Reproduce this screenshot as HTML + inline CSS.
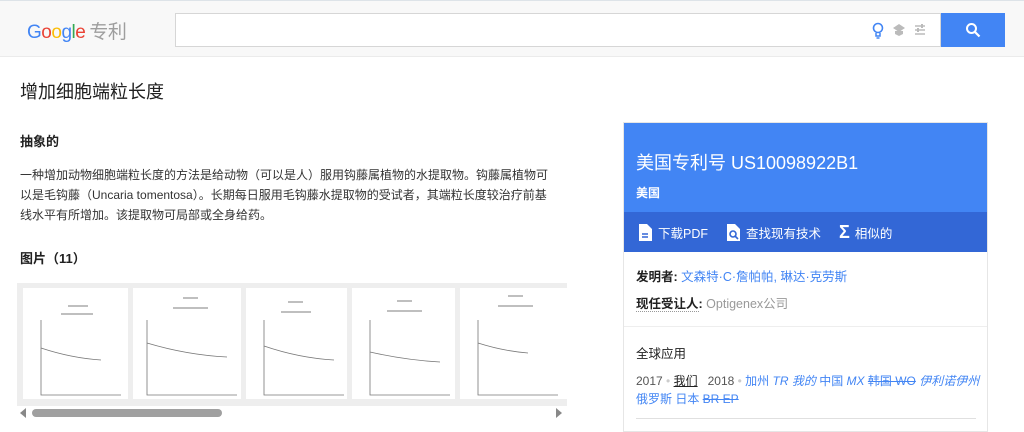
<!DOCTYPE html>
<html><head><meta charset="utf-8"><style>
*{margin:0;padding:0;box-sizing:border-box}
body{width:1024px;height:429px;overflow:hidden;background:#fff;font-family:"Liberation Sans","Noto Sans CJK SC",sans-serif;color:#212121;position:relative}
.hdr{position:absolute;left:0;top:0;width:1024px;height:57px;background:#f8f8f8;border-top:1px solid #dde3e8;border-bottom:1px solid #ebebeb}
.logo{position:absolute;left:27px;top:16px;font-size:19px;letter-spacing:-0.5px}
.logo .zl{color:#9e9e9e;font-size:19px;margin-left:4px}
.search{position:absolute;left:175px;top:12px;width:766px;height:34px;background:#fff;border:1px solid #d6d6d6}
.sbtn{position:absolute;left:941px;top:12px;width:64px;height:34px;background:#4285f4}
h1{position:absolute;left:20px;top:78px;font-size:18px;font-weight:normal;color:#212121}
.t{position:absolute;left:20px;font-size:13px}
.abs{position:absolute;left:20px;top:165px;width:535px;font-size:12px;line-height:20px;color:#333}
.strip{position:absolute;left:17px;top:283px;width:550px;height:123px;background:#eee}
.th{position:absolute;top:5px;height:111px;background:#fff}
.card{position:absolute;left:623px;top:122px;width:365px;height:310px;border:1px solid #e6e6e6;background:#fff}
.blue{height:89px;background:#4285f4;color:#fff;padding:26px 12px}
.blue .a{font-size:18px}
.blue .b{font-size:12px;margin-top:9px;font-weight:bold}
.bar{height:40px;background:#3367d6;color:#fff;font-size:12.5px;display:flex;align-items:center;padding-left:14px;gap:0}
.bar span{display:flex;align-items:center;margin-right:18px}
.row{position:absolute;left:12px;font-size:12.5px}
a{color:#4285f4;text-decoration:none}
</style></head><body>
<div class="hdr">
<div class="logo"><span style="color:#4285f4">G</span><span style="color:#ea4335">o</span><span style="color:#fbbc05">o</span><span style="color:#4285f4">g</span><span style="color:#34a853">l</span><span style="color:#ea4335">e</span><span class="zl">专利</span></div>
<div class="search">
<svg style="position:absolute;left:696px;top:8px" width="12" height="18" viewBox="0 0 12 18"><circle cx="6" cy="6" r="4.5" fill="none" stroke="#4285f4" stroke-width="1.6"/><path d="M4 11v3h4v-3M4.5 16h3" stroke="#4285f4" stroke-width="1.5" fill="none"/></svg>
<svg style="position:absolute;left:716px;top:9px" width="14" height="14" viewBox="0 0 14 14"><path d="M7 1L1 5l6 4 6-4z M3 8v3l4 2 4-2V8" fill="#bbb"/></svg>
<svg style="position:absolute;left:738px;top:10px" width="12" height="12" viewBox="0 0 12 12"><path d="M1 2h10M1 6h10M1 10h10" stroke="#bbb" stroke-width="1.5"/><rect x="7" y="0" width="2" height="4" fill="#bbb"/><rect x="3" y="4" width="2" height="4" fill="#bbb"/></svg>
</div>
<div class="sbtn"><svg style="position:absolute;left:24px;top:9px" width="16" height="16" viewBox="0 0 16 16"><circle cx="6.5" cy="6.5" r="4.5" fill="none" stroke="#fff" stroke-width="2"/><path d="M10 10l4.5 4.5" stroke="#fff" stroke-width="2.2"/></svg></div>
</div>
<h1>增加细胞端粒长度</h1>
<div class="t" style="top:131px;font-weight:bold">抽象的</div>
<div class="abs">一种增加动物细胞端粒长度的方法是给动物（可以是人）服用钩藤属植物的水提取物。钩藤属植物可以是毛钩藤（Uncaria tomentosa）。长期每日服用毛钩藤水提取物的受试者，其端粒长度较治疗前基线水平有所增加。该提取物可局部或全身给药。</div>
<div class="t" style="top:248px;font-weight:bold">图片（11）</div>
<div class="strip">
<div class="th" style="left:6px;width:105px"><svg width="105" height="111"><path d="M18 32v75h80M18 60q30 10 60 12" stroke="#777" fill="none" stroke-width="0.8"/><path d="M45 18h20M38 26h32" stroke="#aaa" stroke-width="1.5"/></svg></div>
<div class="th" style="left:116px;width:108px"><svg width="108" height="111"><path d="M14 32v75h90M14 55q40 12 80 14" stroke="#777" fill="none" stroke-width="0.8"/><path d="M50 10h15M40 20h35" stroke="#aaa" stroke-width="1.5"/></svg></div>
<div class="th" style="left:229px;width:101px"><svg width="101" height="111"><path d="M18 32v75h80M18 58q35 12 70 14" stroke="#777" fill="none" stroke-width="0.8"/><path d="M42 14h15M35 24h30" stroke="#aaa" stroke-width="1.5"/></svg></div>
<div class="th" style="left:335px;width:103px"><svg width="103" height="111"><path d="M18 32v75h80M18 64q35 8 70 10" stroke="#777" fill="none" stroke-width="0.8"/><path d="M45 13h15M35 23h35" stroke="#aaa" stroke-width="1.5"/></svg></div>
<div class="th" style="left:443px;width:107px"><svg width="107" height="111"><path d="M18 32v75h80M18 55q25 8 50 10" stroke="#777" fill="none" stroke-width="0.8"/><path d="M48 8h15M38 18h35" stroke="#aaa" stroke-width="1.5"/></svg></div>
</div>
<svg style="position:absolute;left:17px;top:406px" width="552" height="14"><path d="M9 2v10L3 7z" fill="#888"/><rect x="15" y="3" width="190" height="8" rx="4" fill="#a0a0a0"/><path d="M539 2v10l6-5z" fill="#888"/></svg>
<div class="card">
<div class="blue"><div class="a">美国专利号 US10098922B1</div><div class="b">美国</div></div>
<div class="bar">
<span><svg width="14" height="17" viewBox="0 0 14 17" style="margin-right:6px"><path d="M1 0h8l5 5v12H1z" fill="#fff"/><path d="M4 10h6M4 13h6" stroke="#3367d6" stroke-width="1.4"/></svg>下载PDF</span>
<span><svg width="15" height="17" viewBox="0 0 15 17" style="margin-right:5px"><path d="M1 0h8l5 5v12H1z" fill="#fff"/><circle cx="7" cy="10" r="3" fill="none" stroke="#3367d6" stroke-width="1.6"/><path d="M9 12l3 3" stroke="#3367d6" stroke-width="1.6"/></svg>查找现有技术</span>
<span><span style="font-size:18px;font-weight:bold;margin-right:5px">Σ</span>相似的</span>
</div>
<div class="row" style="top:143px"><b>发明者:</b> <a>文森特·C·詹帕帕, 琳达·克劳斯</a></div>
<div class="row" style="top:170px"><b style="border-bottom:1px dotted #999">现任受让人</b><b>:</b> <span style="color:#999">Optigenex公司</span></div>
<div style="position:absolute;left:0;top:203px;width:100%;border-top:1px solid #eee"></div>
<div class="row" style="top:220px">全球应用</div>
<div class="row" style="top:249px;width:350px;line-height:18px;color:#555;font-size:12px;white-space:nowrap">2017 <span style="color:#ccc">•</span> <u style="color:#212121">我们</u> &nbsp; 2018 <span style="color:#ccc">•</span> <a>加州 <i>TR 我的</i> 中国 <i>MX</i> <s>韩国 WO</s> <i>伊利诺伊州</i><br>俄罗斯 日本 <s>BR EP</s></a></div>
<div style="position:absolute;left:12px;top:295px;width:340px;border-top:1px solid #e0e0e0"></div>
</div>
</body></html>
